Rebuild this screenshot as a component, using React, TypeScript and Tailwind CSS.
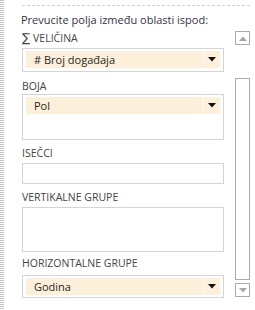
import React from "react";

const Arrow = () => (
  <svg width="8" height="5" viewBox="0 0 8 5" className="block">
    <polygon points="0,0 8,0 4,4.5" fill="#111" />
  </svg>
);

const Item = ({ text }: { text: string }) => (
  <div className="flex h-[17px] w-full">
    <div className="flex-1 bg-[#fdf0da] pl-[8px] text-[11px] leading-[17px] text-[#262626]">{text}</div>
    <div className="ml-[1px] flex w-[16px] items-center justify-center bg-[#fdf0da]">
      <Arrow />
    </div>
  </div>
);

const Label = ({ children, mt }: { children: React.ReactNode; mt: string }) => (
  <div className={`h-[16px] text-[10.5px] leading-[16px] text-[#444] ${mt}`}>{children}</div>
);

export default function App() {
  return (
    <div
      className="flex h-[310px] w-[255px] bg-white"
      style={{ fontFamily: '"Open Sans", "Noto Sans", sans-serif' }}
    >
      <div
        className="h-full w-[4px]"
        style={{
          backgroundImage:
            "repeating-linear-gradient(to bottom, #c4c4c4 0px, #c4c4c4 1px, #ffffff 1px, #ffffff 2px)",
        }}
      />
      <div className="flex flex-1 flex-col pl-[18px] pr-[5px]">
        <div className="mt-[5px] border-t border-dashed border-[#d0d0d0]" />
        <div className="mt-[6px] -ml-[1px] text-[11px] leading-[16px] text-[#33333f]">
          Prevucite polja između oblasti ispod:
        </div>
        <div className="flex">
          <div className="flex w-[202px] flex-col">
            <Label mt="mt-[2px]">
              <span
                className="mr-[3px] text-[12px]"
                style={{ fontFamily: '"DejaVu Sans", sans-serif' }}
              >
                ∑
              </span>
              VELIČINA
            </Label>
            <div className="mt-[2px] h-[24px] border border-[#d4d4d4] px-[3px] py-[2px]">
              <Item text="# Broj događaja" />
            </div>
            <Label mt="mt-[6px]">BOJA</Label>
            <div className="h-[46px] border border-[#d4d4d4] px-[3px] py-[2px]">
              <Item text="Pol" />
            </div>
            <Label mt="mt-[5px]">ISEČCI</Label>
            <div className="mt-[2px] h-[21px] border border-[#d4d4d4]" />
            <Label mt="mt-[5px]">VERTIKALNE GRUPE</Label>
            <div className="mt-[2px] h-[45px] border border-[#d4d4d4]" />
            <Label mt="mt-[3px]">HORIZONTALNE GRUPE</Label>
            <div className="mt-[4px] h-[23px] border border-[#d4d4d4] px-[3px] py-[2px]">
              <Item text="Godina" />
            </div>
          </div>
          <div className="ml-[11px] flex w-[15px] flex-col">
            <div className="mt-[3px] flex h-[14px] items-center justify-center border border-[#ababab]">
              <svg width="8" height="5" viewBox="0 0 8 5">
                <polygon points="0,5 8,5 4,0.5" fill="#a6a6a6" />
              </svg>
            </div>
            <div className="mt-[33px] h-[202px] border border-[#ababab]" />
            <div className="mt-[3px] flex h-[14px] items-center justify-center border border-[#ababab]">
              <svg width="8" height="5" viewBox="0 0 8 5">
                <polygon points="0,0 8,0 4,4.5" fill="#a6a6a6" />
              </svg>
            </div>
          </div>
        </div>
      </div>
    </div>
  );
}
